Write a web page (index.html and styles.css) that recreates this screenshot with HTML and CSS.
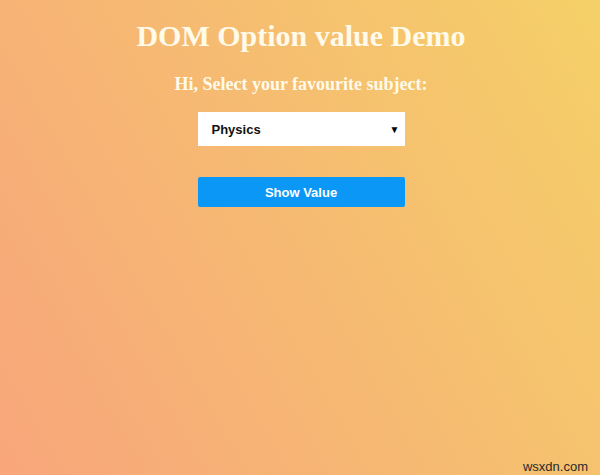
FILE: index.html
```html
<!DOCTYPE html>
<html>
<head>
<meta charset="utf-8">
<link rel="stylesheet" href="styles.css">
</head>
<body>
<main class="page">
  <h1 class="title">DOM Option value Demo</h1>
  <h3 class="subtitle">Hi, Select your favourite subject:</h3>
  <div class="select">
    <span class="select-text">Physics</span>
    <span class="select-arrow">▼</span>
  </div>
  <button class="btn">Show Value</button>
  <div class="watermark">wsxdn.com</div>
</main>
</body>
</html>
```
FILE: styles.css
```css
html, body {
  margin: 0;
  padding: 0;
}
body {
  width: 600px;
  height: 475px;
  overflow: hidden;
  background: linear-gradient(60deg, #f8a67b 0%, #f6b873 45%, #f5d068 100%);
  font-family: "Liberation Serif", "Times New Roman", serif;
}
.page {
  position: relative;
  height: 475px;
  padding-left: 2px;
  box-sizing: border-box;
  display: flex;
  flex-direction: column;
  align-items: center;
}
.title {
  margin: 18px 0 0;
  font-size: 30px;
  line-height: 35px;
  font-weight: bold;
  color: #fffaea;
}
.subtitle {
  margin: 21px 0 0;
  font-size: 18px;
  line-height: 21px;
  font-weight: bold;
  color: #fffaea;
}
.select {
  margin-top: 17px;
  width: 207px;
  height: 34px;
  box-sizing: border-box;
  background: #fff;
  display: flex;
  align-items: center;
  justify-content: space-between;
  padding: 0 5px 0 14px;
  font-family: "Liberation Sans", Arial, sans-serif;
  font-weight: bold;
  font-size: 13px;
  color: #111;
}
.select-arrow {
  font-size: 10px;
  color: #000;
}
.btn {
  margin-top: 31px;
  width: 207px;
  height: 30px;
  border: none;
  border-radius: 2px;
  background: #0a97f5;
  color: #fff;
  font-family: "Liberation Sans", Arial, sans-serif;
  font-weight: bold;
  font-size: 13px;
  padding: 0;
}
.watermark {
  position: absolute;
  right: 12px;
  bottom: 1px;
  font-family: "Liberation Sans", Arial, sans-serif;
  font-size: 13px;
  color: #2a2a2a;
}
```
